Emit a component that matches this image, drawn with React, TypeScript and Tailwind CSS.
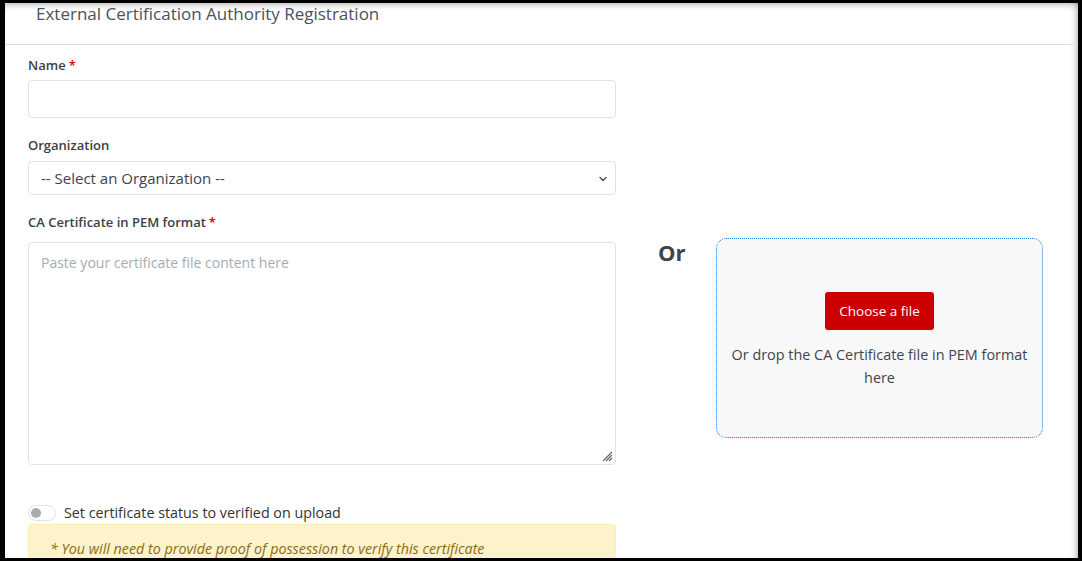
import { ChevronDown } from 'lucide-react';

const font = { fontFamily: '"Open Sans", "Noto Sans", sans-serif' };

function Label({ text, required }: { text: string; required?: boolean }) {
  return (
    <div className="text-[13px] font-semibold text-[#3a3f47] leading-[18px]">
      {text}
      {required && <span className="text-[#d00] ml-[3px]">*</span>}
    </div>
  );
}

export default function App() {
  return (
    <div className="h-[561px] w-[1082px] bg-black pt-[3px] pl-[5px] pr-[4px] pb-[3px]" style={font}>
      <div className="h-full w-full overflow-hidden bg-white shadow-[inset_0_6px_6px_-4px_rgba(0,0,0,0.25),inset_-6px_0_6px_-4px_rgba(0,0,0,0.25)]">
        {/* header */}
        <div className="h-[42px] border-b border-[#dee2e6] pl-[31px] pt-[1px]">
          <h1 className="text-[17px] leading-[20px] text-[#4a5160]">
            External Certification Authority Registration
          </h1>
        </div>

        <div className="flex pl-[23px] pt-[11px]">
          {/* left column */}
          <div className="w-[588px] shrink-0">
            <Label text="Name" required />
            <input className="mt-[6px] block h-[38px] w-full rounded-[4px] border border-[#dfe3e8] bg-white px-3 text-[14px] outline-none" />

            <div className="mt-[18px]">
              <Label text="Organization" />
            </div>
            <div className="relative mt-[7px] flex h-[34px] w-full items-center rounded-[4px] border border-[#dfe3e8] px-[12px] text-[15px] text-[#3d4450]">
              -- Select an Organization --
              <ChevronDown className="absolute right-[6px] top-[11px] h-[12px] w-[12px] text-[#444]" strokeWidth={2.5} />
            </div>

            <div className="mt-[18px]">
              <Label text="CA Certificate in PEM format" required />
            </div>
            <div className="relative mt-[11px] h-[223px] w-full rounded-[4px] border border-[#dfe3e8] px-[12px] pt-[7px]">
              <span className="text-[14px] text-[#a6acb3]">Paste your certificate file content here</span>
              <svg className="absolute bottom-[2px] right-[2px]" width="12" height="12" viewBox="0 0 12 12">
                <path d="M11 2 L2 11 M11 5 L5 11 M11 8 L8 11" stroke="#666" strokeWidth="1.2" />
              </svg>
            </div>

            <div className="mt-[39px] flex items-center gap-[8px]">
              <div className="relative h-[16px] w-[28px] rounded-full border border-[#dfe3e8] bg-white">
                <div className="absolute left-[2px] top-[2px] h-[10px] w-[10px] rounded-full bg-[#a6acb3]" />
              </div>
              <span className="text-[14.3px] text-[#333] leading-[18px]">Set certificate status to verified on upload</span>
            </div>
            <div className="mt-[2px] h-[60px] rounded-[3px] border border-[#fbeeb8] bg-[#fcf3cd] px-[21px] pt-[13px] text-[14.3px] italic text-[#8a6d0b]">
              * You will need to provide proof of possession to verify this certificate
            </div>
          </div>

          {/* Or */}
          <div className="w-[100px] shrink-0 pt-[180px] pl-[42px] text-[22px] font-bold text-[#3d4450]">Or</div>

          {/* drop zone */}
          <div className="mt-[182px] flex h-[200px] w-[327px] shrink-0 flex-col items-center rounded-[10px] border border-dotted border-[#0b79e3] bg-[#f8f8f8] pt-[53px]">
            <button className="h-[38px] rounded-[3px] bg-[#cc0000] px-[14px] text-[13.5px] font-medium text-white">
              Choose a file
            </button>
            <p className="mt-[13px] px-[12px] text-center text-[14.4px] leading-[23px] text-[#3d4450]">
              Or drop the CA Certificate file in PEM format here
            </p>
          </div>
        </div>
      </div>
    </div>
  );
}
